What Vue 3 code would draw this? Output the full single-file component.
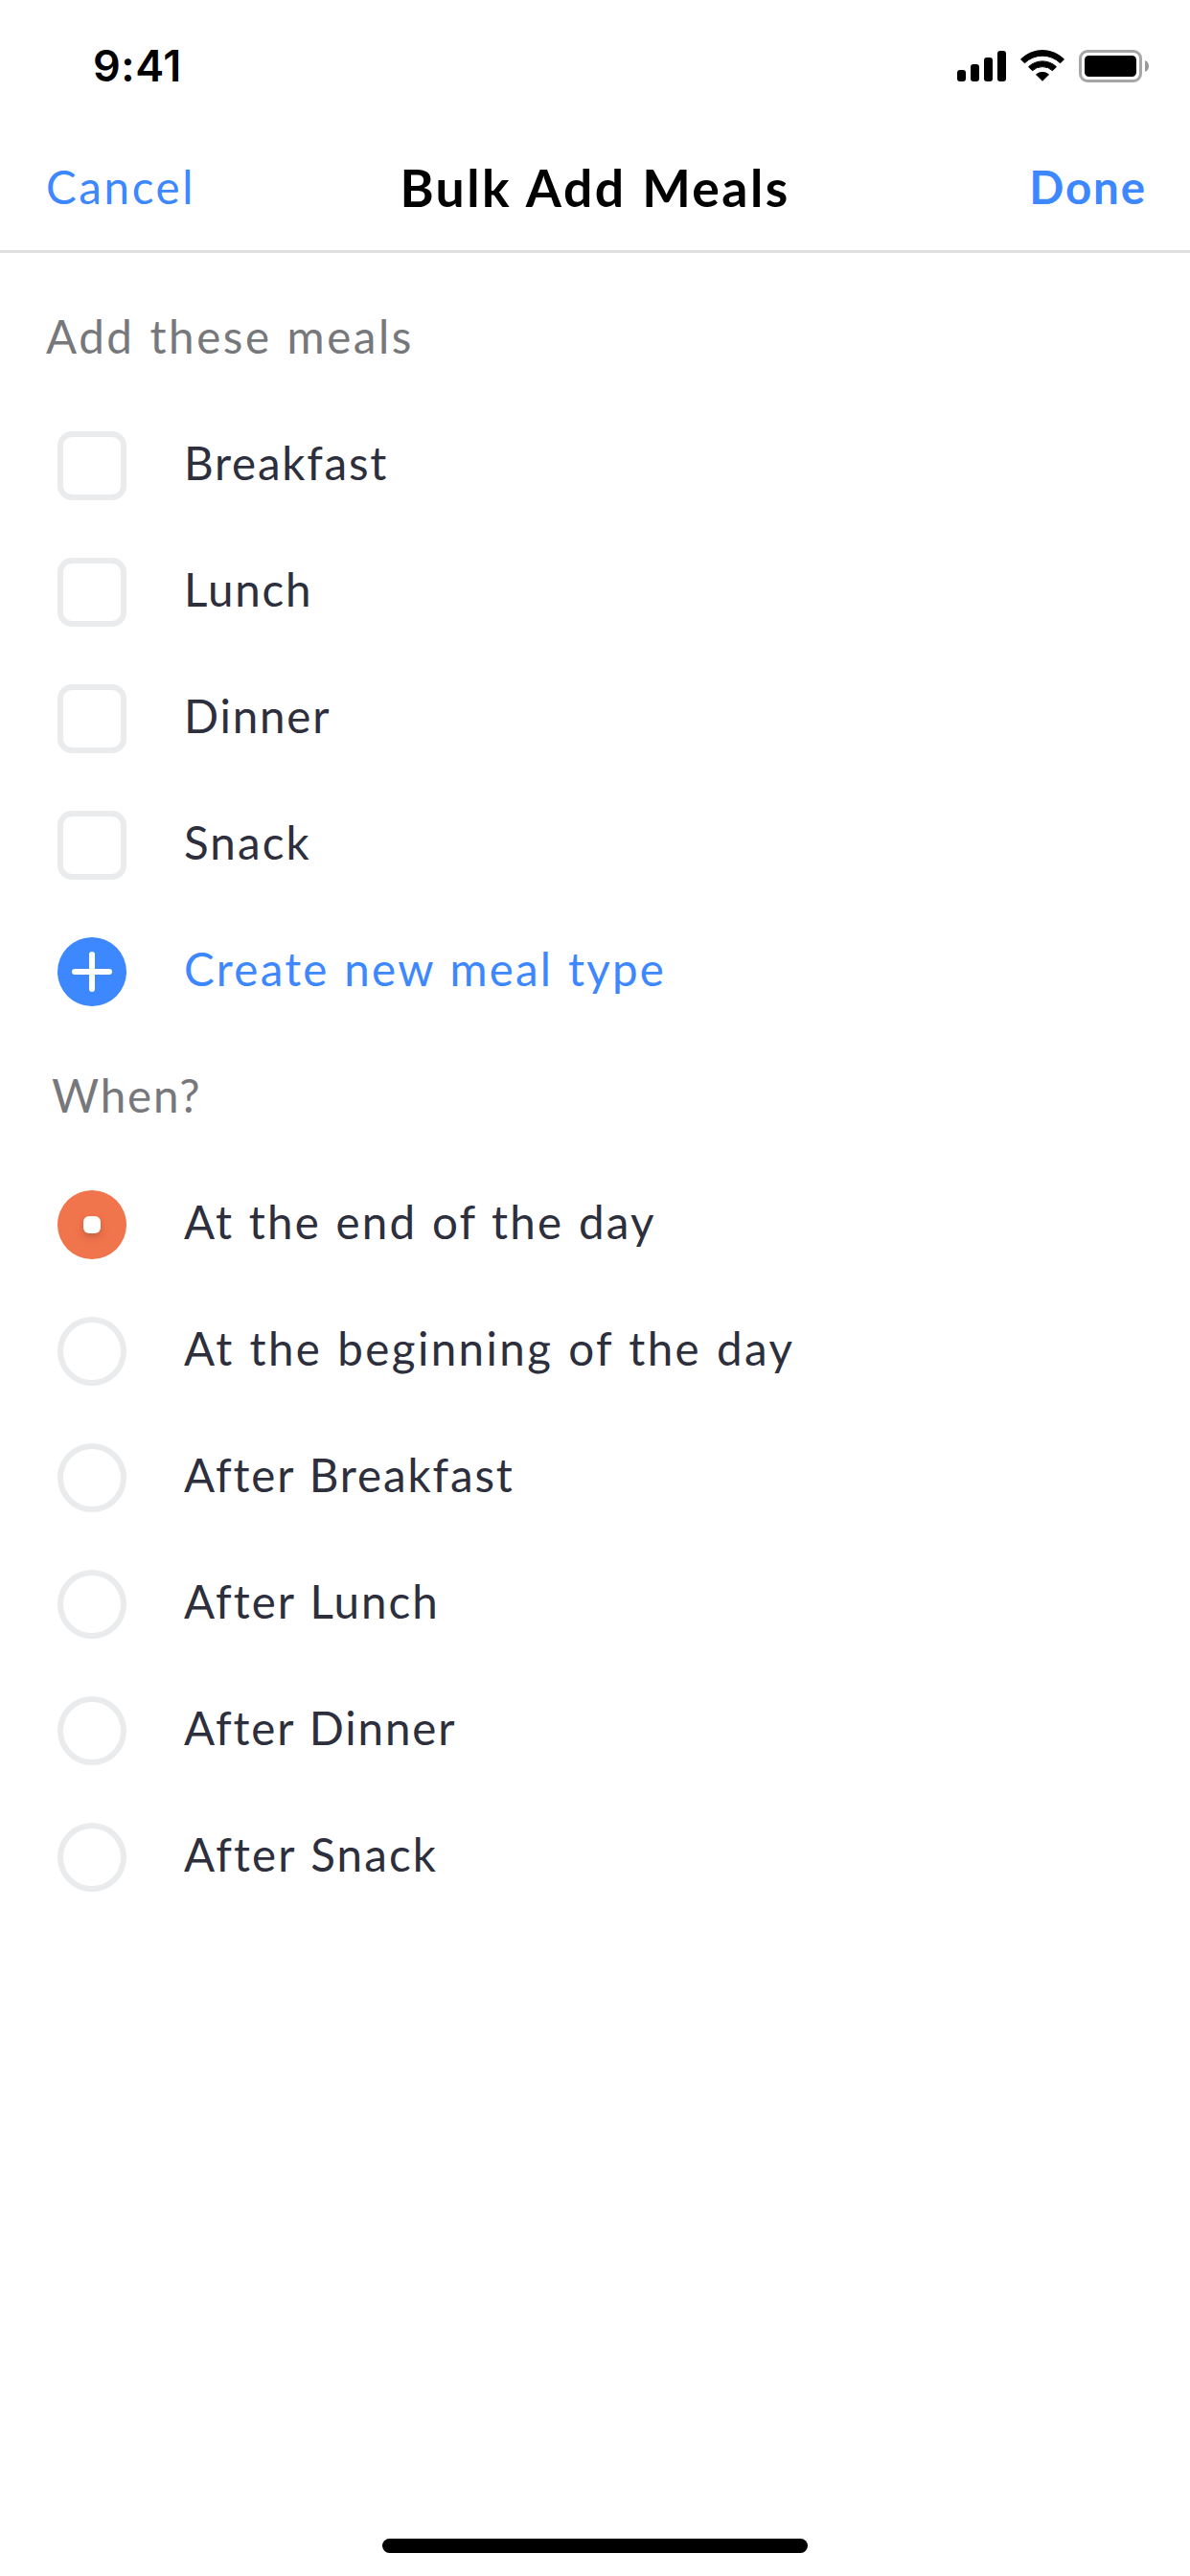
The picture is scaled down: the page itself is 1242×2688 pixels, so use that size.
<script setup>
import { ref } from 'vue'

const meals = ref([
  { label: 'Breakfast', tracking: 1.78, checked: false },
  { label: 'Lunch', tracking: 1.85, checked: false },
  { label: 'Dinner', tracking: 1.8, checked: false },
  { label: 'Snack', tracking: 2.1, checked: false },
])

const positions = [
  { label: 'At the end of the day', tracking: 2.18 },
  { label: 'At the beginning of the day', tracking: 2.42 },
  { label: 'After Breakfast', tracking: 1.88 },
  { label: 'After Lunch', tracking: 2.01 },
  { label: 'After Dinner', tracking: 1.88 },
  { label: 'After Snack', tracking: 2.12 },
]

const selected = ref(0)
</script>

<template>
  <div class="screen">
    <div class="status">
      <span class="time">9:41</span>
      <svg class="indicators" width="204" height="36" viewBox="0 0 204 36">
        <rect x="1" y="22" width="9" height="12" rx="3" />
        <rect x="15" y="16" width="9" height="18" rx="3" />
        <rect x="29" y="9" width="9" height="25" rx="3" />
        <rect x="43" y="2" width="9" height="32" rx="3" />
        <g stroke="#000" stroke-width="1" stroke-linejoin="round">
          <path d="M67.5 10.8A32 32 0 0 1 112.5 10.8L108.6 14.8A26.5 26.5 0 0 0 71.4 14.8Z" />
          <path d="M75.5 18.7A21 21 0 0 1 104.5 18.7L100.5 22.7A15.5 15.5 0 0 0 79.5 22.7Z" />
          <path d="M83.5 26.8A10 10 0 0 1 96.5 26.8L90 33.3Z" />
        </g>
        <rect x="129.5" y="2.5" width="63" height="31" rx="7.5" fill="none" stroke="#a6a6a6" stroke-width="3" />
        <rect x="134" y="7" width="54" height="22" rx="4.5" />
        <path d="M197 12A6.5 6.5 0 0 1 197 24Z" fill="#999" />
      </svg>
    </div>

    <header class="nav">
      <a class="cancel">Cancel</a>
      <h1 class="title">Bulk Add Meals</h1>
      <a class="done">Done</a>
    </header>

    <main class="content">
      <h2 class="heading">Add these meals</h2>
      <div v-for="meal in meals" :key="meal.label" class="row" @click="meal.checked = !meal.checked">
        <span class="box" :class="{ on: meal.checked }"></span>
        <span class="label" :style="{ letterSpacing: meal.tracking + 'px' }">{{ meal.label }}</span>
      </div>
      <div class="row create">
        <svg class="plus" width="72" height="72" viewBox="0 0 72 72">
          <circle cx="36" cy="36" r="36" fill="#3d87ff" />
          <path d="M18 36H54M36 18V54" stroke="#fff" stroke-width="6" stroke-linecap="round" />
        </svg>
        <span class="label">Create new meal type</span>
      </div>

      <h2 class="heading when">When?</h2>
      <div v-for="(item, i) in positions" :key="item.label" class="row" @click="selected = i">
        <span class="radio" :class="{ on: selected === i }"><i v-if="selected === i"></i></span>
        <span class="label" :style="{ letterSpacing: item.tracking + 'px' }">{{ item.label }}</span>
      </div>
    </main>

    <div class="home"></div>
  </div>
</template>

<style>
body {
  background: #fff;
}
</style>

<style scoped>
.screen {
  box-sizing: border-box;
  display: flex;
  flex-direction: column;
  width: 1242px;
  height: 2688px;
  padding-bottom: 24px;
  background: #fff;
  color: #2d2f3d;
  font-family: Lato, 'Liberation Sans', sans-serif;
  font-size: 47.5px;
  word-spacing: 1.3px;
}

.status {
  box-sizing: border-box;
  display: flex;
  align-items: flex-start;
  justify-content: space-between;
  height: 132px;
  padding: 51px 40px 0 97px;
}

.time {
  color: #000;
  font-family: Inter, 'Liberation Sans', sans-serif;
  font-size: 45px;
  font-weight: 600;
  line-height: 36px;
  letter-spacing: 0.5px;
}

.nav {
  box-sizing: border-box;
  display: grid;
  grid-template-columns: 1fr auto 1fr;
  align-items: start;
  height: 132px;
  padding: 0 45px;
  border-bottom: 3px solid #e0e0e0;
  line-height: 126px;
}

.cancel,
.done {
  color: #3d87ff;
}

.cancel {
  padding-left: 3px;
  letter-spacing: 2.62px;
}

.done {
  justify-self: end;
  font-weight: 700;
  letter-spacing: 1.87px;
}

.title {
  margin: 0;
  color: #000;
  font-size: 53.5px;
  font-weight: 700;
  letter-spacing: 2.43px;
}

.content {
  flex: 1;
  padding-top: 24px;
}

.heading {
  height: 132px;
  margin: 0;
  padding-left: 48px;
  color: #77787b;
  font-size: inherit;
  font-weight: 400;
  line-height: 125px;
  letter-spacing: 2.55px;
}

.when {
  padding-left: 54px;
  letter-spacing: 1.8px;
}

.row {
  display: flex;
  align-items: center;
  gap: 60px;
  height: 132px;
  padding-left: 60px;
}

.label {
  height: 132px;
  line-height: 125px;
}

.create .label {
  color: #3d87ff;
  letter-spacing: 2.23px;
}

.box,
.radio {
  box-sizing: border-box;
  width: 72px;
  height: 72px;
  border: 6px solid #e9ebec;
}

.box {
  border-radius: 15px;
}

.box.on {
  border-color: #f0744c;
  background: #f0744c;
}

.radio {
  display: flex;
  align-items: center;
  justify-content: center;
  border-radius: 50%;
}

.radio.on {
  border: 0;
  background: #f0744c;
}

.radio i {
  width: 18px;
  height: 18px;
  border-radius: 6px;
  background: #fff;
  box-shadow: 0 3px 6px rgba(0, 0, 0, 0.14), 0 6px 15px rgba(0, 0, 0, 0.06);
}

.home {
  align-self: center;
  width: 444px;
  height: 15px;
  border-radius: 8px;
  background: #000;
}
</style>
